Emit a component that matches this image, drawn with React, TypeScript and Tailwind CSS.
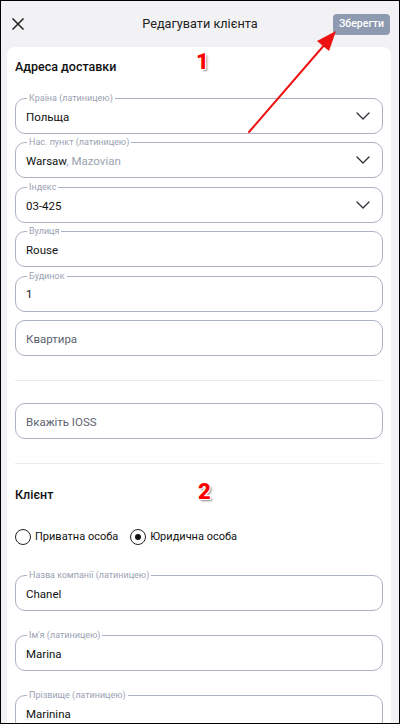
import React from 'react';

type FieldProps = {
  label?: string;
  children: React.ReactNode;
  select?: boolean;
  placeholder?: boolean;
};

function Chevron() {
  return (
    <svg width="14" height="8" viewBox="0 0 14 8" fill="none" className="shrink-0">
      <path d="M1 1l6 6 6-6" stroke="#2b2f36" strokeWidth="1.3" strokeLinecap="round" strokeLinejoin="round" />
    </svg>
  );
}

function Field({ label, children, select, placeholder }: FieldProps) {
  return (
    <div className="relative flex h-[36px] items-center justify-between rounded-[10px] border border-[#aab2c3] pl-[10px] pr-[12px]">
      {label && (
        <span className="absolute -top-[6px] left-[11px] bg-white px-[2px] text-[9px] leading-[11px] text-[#9aa2b2]">
          {label}
        </span>
      )}
      <span
        className={`pt-[3px] text-[11.5px] ${placeholder ? 'text-[#5d6370]' : 'text-[#111]'}`}
      >
        {children}
      </span>
      {select && <Chevron />}
    </div>
  );
}

function Radio({ label, checked }: { label: string; checked?: boolean }) {
  return (
    <div className="flex items-center gap-[4px]">
      <span className="flex h-[16px] w-[16px] items-center justify-center rounded-full border border-[#222]">
        {checked && <span className="h-[6px] w-[6px] rounded-full bg-[#111]" />}
      </span>
      <span className="text-[11px] text-[#111]">{label}</span>
    </div>
  );
}

const badge =
  'absolute text-[22px] font-black leading-none text-[#f00] [text-shadow:1px_1px_0_#fff,-1px_-1px_0_#fff,1px_-1px_0_#fff,-1px_1px_0_#fff,2px_2px_2px_#888]';

export default function App() {
  return (
    <div
      className="relative h-[724px] w-[400px] overflow-hidden border border-black bg-[#f2f2f4]"
      style={{ fontFamily: 'Roboto, "Noto Sans", sans-serif' }}
    >
      {/* Header */}
      <div className="flex h-[46px] items-center justify-between pl-[9px] pr-[9px]">
        <svg width="14" height="14" viewBox="0 0 14 14" className="ml-[1px]">
          <path d="M1.5 1.5l11 11M12.5 1.5l-11 11" stroke="#222" strokeWidth="1.5" />
        </svg>
        <span className="ml-[42px] text-[12.7px] text-[#222]">Редагувати клієнта</span>
        <button className="h-[21px] w-[57px] rounded-[4px] bg-[#8e9ab0] text-[10.5px] font-medium text-white">
          Зберегти
        </button>
      </div>

      {/* Card */}
      <div className="ml-[6px] mr-[8px] rounded-t-[8px] bg-white px-[8px] pt-[10px] pb-[20px]">
        <h2 className="h-[20px] text-[12.5px] font-medium leading-[20px] text-[#111]">Адреса доставки</h2>

        <div className="mt-[21px] flex flex-col gap-[8.4px]">
          <Field label="Країна (латиницею)" select>
            Польща
          </Field>
          <Field label="Нас. пункт (латиницею)" select>
            Warsaw<span className="text-[#9aa2b0]">, Mazovian</span>
          </Field>
          <Field label="Індекс" select>
            03-425
          </Field>
          <Field label="Вулиця">Rouse</Field>
          <Field label="Будинок">1</Field>
          <Field placeholder>Квартира</Field>
        </div>

        <div className="mt-[24px] h-px bg-[#ebebed]" />

        <div className="mt-[22px]">
          <Field placeholder>Вкажіть IOSS</Field>
        </div>

        <div className="mt-[24px] h-px bg-[#ebebed]" />

        <h2 className="mt-[21px] h-[20px] text-[12.5px] font-medium leading-[20px] text-[#111]">Клієнт</h2>

        <div className="mt-[24px] flex items-center gap-[12px]">
          <Radio label="Приватна особа" />
          <Radio label="Юридична особа" checked />
        </div>

        <div className="mt-[30px] flex flex-col gap-[24px]">
          <Field label="Назва компанії (латиницею)">Chanel</Field>
          <Field label="Ім'я (латиницею)">Marina</Field>
          <Field label="Прізвище (латиницею)">Marinina</Field>
        </div>
      </div>

      {/* Annotations */}
      <span className={`${badge} left-[195px] top-[50px]`}>1</span>
      <span className={`${badge} left-[197px] top-[480px]`}>2</span>
      <svg className="pointer-events-none absolute left-0 top-0" width="400" height="724">
        <path d="M248 131 L325 42" stroke="#ee1111" strokeWidth="2" strokeLinecap="round" />
        <path d="M335 30 L316 40 L328 50 Z" fill="#ee1111" />
      </svg>
    </div>
  );
}
